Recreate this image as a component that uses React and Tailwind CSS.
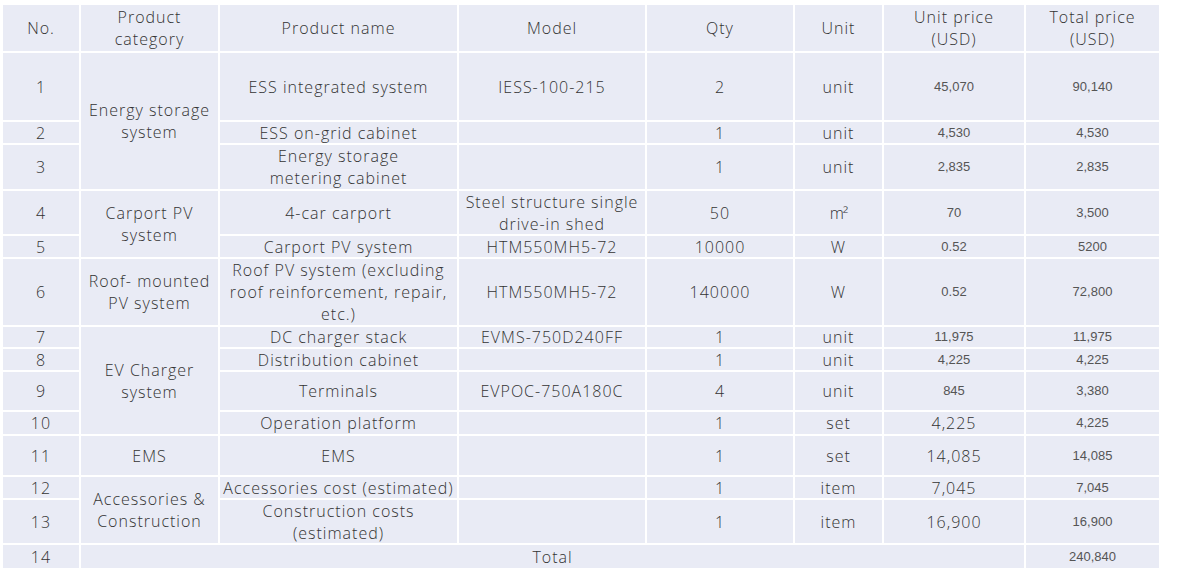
import React from "react";

const base =
  "bg-[#e9ebf5] flex items-center justify-center text-center leading-[22px]";
const big =
  "text-[16px] tracking-[1px] text-[#333333] font-['Open_Sans','Noto_Sans',sans-serif] font-light";
const small = "text-[13px] text-[#555555] font-['Liberation_Sans',Arial,sans-serif]";

function C({ pos, sm, children }) {
  return <div className={`${base} ${sm ? small : big} ${pos}`}>{children}</div>;
}

const rowStart = [
  "row-start-2",
  "row-start-3",
  "row-start-4",
  "row-start-5",
  "row-start-6",
  "row-start-7",
  "row-start-8",
  "row-start-9",
  "row-start-10",
  "row-start-11",
  "row-start-12",
  "row-start-13",
  "row-start-14",
];

const sqm = <span className="tracking-[-1px]">m²</span>;

const rows = [
  [1, "ESS integrated system", "IESS-100-215", "2", "unit", "45,070", true, "90,140"],
  [2, "ESS on-grid cabinet", "", "1", "unit", "4,530", true, "4,530"],
  [3, <>Energy storage<br />metering cabinet</>, "", "1", "unit", "2,835", true, "2,835"],
  [4, "4-car carport", <>Steel structure single<br />drive-in shed</>, "50", sqm, "70", true, "3,500"],
  [5, "Carport PV system", "HTM550MH5-72", "10000", "W", "0.52", true, "5200"],
  [6, <>Roof PV system (excluding<br />roof reinforcement, repair,<br />etc.)</>, "HTM550MH5-72", "140000", "W", "0.52", true, "72,800"],
  [7, "DC charger stack", "EVMS-750D240FF", "1", "unit", "11,975", true, "11,975"],
  [8, "Distribution cabinet", "", "1", "unit", "4,225", true, "4,225"],
  [9, "Terminals", "EVPOC-750A180C", "4", "unit", "845", true, "3,380"],
  [10, "Operation platform", "", "1", "set", "4,225", false, "4,225"],
  [11, "EMS", "", "1", "set", "14,085", false, "14,085"],
  [12, "Accessories cost (estimated)", "", "1", "item", "7,045", false, "7,045"],
  [13, <>Construction costs<br />(estimated)</>, "", "1", "item", "16,900", false, "16,900"],
];

const cats = [
  { pos: "col-start-2 row-start-2 row-span-3", t: <>Energy storage<br />system</> },
  { pos: "col-start-2 row-start-5 row-span-2", t: <>Carport PV<br />system</> },
  { pos: "col-start-2 row-start-7", t: <>Roof- mounted<br />PV system</> },
  { pos: "col-start-2 row-start-8 row-span-4", t: <>EV Charger<br />system</> },
  { pos: "col-start-2 row-start-12", t: "EMS" },
  { pos: "col-start-2 row-start-13 row-span-2", t: <>Accessories &amp;<br />Construction</> },
];

export default function App() {
  return (
    <div className="w-[1197px] h-[575px] bg-white pt-[5px] pl-[3px]">
      <div className="grid w-[1156px] gap-[2px] bg-white grid-cols-[76px_137px_237px_186px_146px_87px_140px_133px] grid-rows-[46px_67px_21px_44px_43px_21px_66px_20px_21px_38px_22px_39px_21px_43px_23px]">
        <C pos="col-start-1 row-start-1">No.</C>
        <C pos="col-start-2 row-start-1">Product<br />category</C>
        <C pos="col-start-3 row-start-1">Product name</C>
        <C pos="col-start-4 row-start-1">Model</C>
        <C pos="col-start-5 row-start-1">Qty</C>
        <C pos="col-start-6 row-start-1">Unit</C>
        <C pos="col-start-7 row-start-1">Unit price<br />(USD)</C>
        <C pos="col-start-8 row-start-1">Total price<br />(USD)</C>

        {cats.map((k, i) => (
          <C key={"cat" + i} pos={k.pos}>
            {k.t}
          </C>
        ))}

        {rows.map((row, i) => {
          const rs = rowStart[i];
          const [n, name, model, qty, unit, up, upSmall, tot] = row;
          return (
            <React.Fragment key={i}>
              <C pos={`col-start-1 ${rs}`}>{n}</C>
              <C pos={`col-start-3 ${rs}`}>{name}</C>
              <C pos={`col-start-4 ${rs}`}>{model}</C>
              <C pos={`col-start-5 ${rs}`}>{qty}</C>
              <C pos={`col-start-6 ${rs}`}>{unit}</C>
              <C pos={`col-start-7 ${rs}`} sm={upSmall}>{up}</C>
              <C pos={`col-start-8 ${rs}`} sm>{tot}</C>
            </React.Fragment>
          );
        })}

        <C pos="col-start-1 row-start-15">14</C>
        <C pos="col-start-2 col-span-6 row-start-15">Total</C>
        <C pos="col-start-8 row-start-15" sm>240,840</C>
      </div>
    </div>
  );
}
